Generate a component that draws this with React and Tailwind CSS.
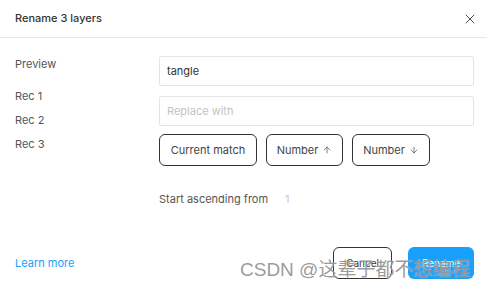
import { X, ArrowUp, ArrowDown } from "lucide-react";

const font = { fontFamily: "Inter, 'Noto Sans', sans-serif" };

export default function App() {
  return (
    <div className="relative w-[487px] h-[290px] bg-white overflow-hidden text-[#333]" style={font}>
      <div className="flex items-center justify-between h-[38px] pl-[15px] pr-[9px] border-b border-[#e6e6e6]">
        <span className="text-[11px] font-medium text-[#333]">Rename 3 layers</span>
        <X className="w-[16px] h-[16px] text-[#333]" strokeWidth={1.3} />
      </div>

      <div className="flex pt-[18px]">
        <div className="w-[159px] shrink-0 pl-[15px] flex flex-col text-[11px] text-[#555]">
          <span className="leading-[14px] mt-[1px]">Preview</span>
          <span className="leading-[14px] mt-[18px]">Rec 1</span>
          <span className="leading-[14px] mt-[10px]">Rec 2</span>
          <span className="leading-[14px] mt-[10px]">Rec 3</span>
        </div>
        <div className="w-[315px] flex flex-col">
          <div className="h-[30px] border border-[#e5e5e5] rounded-[2px] flex items-center px-[7px] text-[11px] text-[#333]">tangle</div>
          <div className="h-[30px] mt-[10px] border border-[#e5e5e5] rounded-[2px] flex items-center px-[7px] text-[11px] text-[#c4c4c4]">Replace with</div>
          <div className="flex gap-[9px] mt-[8px]">
            <div className="w-[98px] h-[32px] border border-[#333] rounded-[6px] flex items-center justify-center text-[11px] text-[#444]">Current match</div>
            <div className="w-[77px] h-[32px] border border-[#333] rounded-[6px] flex items-center justify-center gap-[4px] text-[11px] text-[#444]">
              Number <ArrowUp className="w-[10px] h-[10px]" strokeWidth={1.6} />
            </div>
            <div className="w-[78px] h-[32px] border border-[#333] rounded-[6px] flex items-center justify-center gap-[4px] text-[11px] text-[#444]">
              Number <ArrowDown className="w-[10px] h-[10px]" strokeWidth={1.6} />
            </div>
          </div>
          <div className="flex mt-[25px] text-[11px]">
            <span className="text-[#555]">Start ascending from</span>
            <span className="ml-[17px] text-[#c8c8c8]">1</span>
          </div>
        </div>
      </div>

      <div className="absolute left-0 right-0 top-[247px] flex items-center pl-[15px] pr-[13px]">
        <span className="text-[11px] text-[#18a0fb]">Learn more</span>
        <div className="ml-auto flex gap-[16px]">
          <div className="w-[59px] h-[32px] border border-[#333] rounded-[6px] flex items-center justify-center text-[10px] text-[#333]">Cancel</div>
          <div className="w-[66px] h-[32px] bg-[#18a0fb] rounded-[6px] flex items-center justify-center text-[10px] text-white">Rename</div>
        </div>
      </div>

      <div
        className="absolute left-[240px] top-[257px] text-[19px] text-[#7f7f7f]/80 leading-[26px] whitespace-nowrap"
        style={{ fontFamily: "'Liberation Sans', 'Noto Sans CJK SC', sans-serif", textShadow: "0 0 1px rgba(255,255,255,0.8)" }}
      >
        CSDN @这辈子都不想编程
      </div>
    </div>
  );
}
